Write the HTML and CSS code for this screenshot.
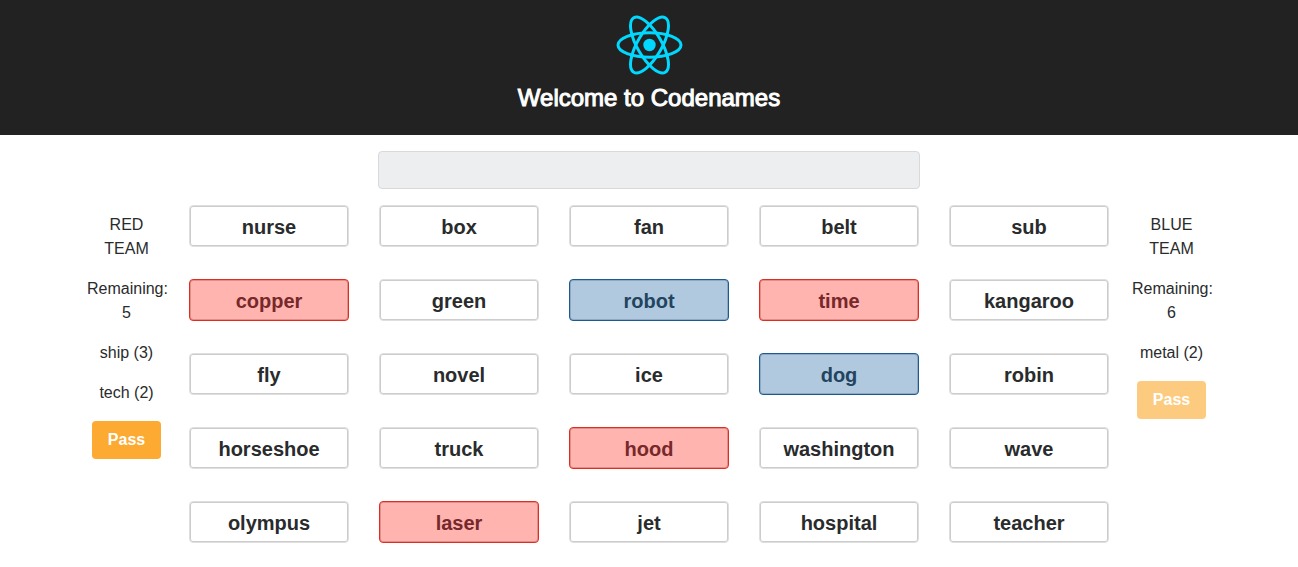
FILE: index.html
```html
<!DOCTYPE html>
<html lang="en">
<head>
<meta charset="utf-8">
<title>Codenames</title>
<link rel="stylesheet" href="styles.css">
</head>
<body>
<header class="header">
<svg class="logo" viewBox="0 0 67 60" role="img" aria-label="React">
<g fill="none" stroke="#00d8ff" stroke-width="3">
<ellipse cx="33.5" cy="30" rx="31.5" ry="12.2"/>
<ellipse cx="33.5" cy="30" rx="31.5" ry="12.2" transform="rotate(60 33.5 30)"/>
<ellipse cx="33.5" cy="30" rx="31.5" ry="12.2" transform="rotate(120 33.5 30)"/>
</g>
<circle cx="33.5" cy="30" r="6.2" fill="#00d8ff"/>
</svg>
<h1 class="title">Welcome to Codenames</h1>
</header>
<main class="game">
<input class="clue" type="text" aria-label="Clue" disabled>
<section class="team">
<p>RED TEAM</p>
<p>Remaining: 5</p>
<p>ship (3)</p>
<p>tech (2)</p>
<button class="pass">Pass</button>
</section>
<section class="board">
<button class="card">nurse</button>
<button class="card">box</button>
<button class="card">fan</button>
<button class="card">belt</button>
<button class="card">sub</button>
<button class="card red">copper</button>
<button class="card">green</button>
<button class="card blue">robot</button>
<button class="card red">time</button>
<button class="card">kangaroo</button>
<button class="card">fly</button>
<button class="card">novel</button>
<button class="card">ice</button>
<button class="card blue">dog</button>
<button class="card">robin</button>
<button class="card">horseshoe</button>
<button class="card">truck</button>
<button class="card red">hood</button>
<button class="card">washington</button>
<button class="card">wave</button>
<button class="card">olympus</button>
<button class="card red">laser</button>
<button class="card">jet</button>
<button class="card">hospital</button>
<button class="card">teacher</button>
</section>
<section class="team">
<p>BLUE TEAM</p>
<p>Remaining: 6</p>
<p>metal (2)</p>
<button class="pass" disabled>Pass</button>
</section>
</main>
</body>
</html>
```
FILE: styles.css
```css
* {
  box-sizing: border-box;
}

body {
  margin: 0;
  background: #fff;
  color: #292b2c;
  font: 16px/24px "Liberation Sans", Arial, sans-serif;
}

.header {
  display: flex;
  flex-direction: column;
  align-items: center;
  gap: 8px;
  padding: 15px 16px 23px;
  background: #222;
  color: #fff;
}

.logo {
  width: 67px;
  height: 60px;
}

.title {
  margin: 0;
  font-size: 24px;
  font-weight: 400;
  line-height: 29px;
  -webkit-text-stroke: 1px #fff;
}

.game {
  display: grid;
  grid-template-columns: minmax(0, 1fr) minmax(0, 10fr) minmax(0, 1fr);
  row-gap: 16px;
  max-width: 1140px;
  margin: 0 auto;
  padding: 16px 0;
}

.clue {
  grid-column: 2;
  justify-self: center;
  width: 57%;
  height: 38px;
  padding: 8px 12px;
  border: 1px solid #d9d9d9;
  border-radius: 4px;
  background: #eceeef;
  font: inherit;
}

.team {
  grid-row: 2;
  padding: 8px 8px 0;
  text-align: center;
}

.team p {
  margin: 0 0 16px;
}

.board {
  grid-row: 2;
  grid-column: 2;
  display: grid;
  grid-template-columns: repeat(5, minmax(0, 1fr));
  gap: 32px 30px;
  padding: 0 15px;
}

.card {
  height: 42px;
  padding: 2px 8px 0;
  border: 1px solid #dfdfdf;
  border-radius: 4px;
  background: #fff;
  box-shadow: inset 0 0 0 1px #ccc;
  color: #292b2c;
  font: bold 20px/24px "Liberation Sans", Arial, sans-serif;
}

.red {
  border-color: #e02d1f;
  background: #ffb4af;
  box-shadow: inset 0 0 0 1px #dd918c;
  color: #76282a;
}

.blue {
  border-color: #1c5a92;
  background: #b1c9df;
  box-shadow: inset 0 0 0 1px #8ea9c1;
  color: #23445e;
}

.pass {
  height: 38px;
  padding: 0 16px;
  border: 0;
  border-radius: 4px;
  background: #fdaa33;
  color: #fff;
  font: bold 16px/24px "Liberation Sans", Arial, sans-serif;
}

.pass:disabled {
  background: #fdcb80;
}
```
